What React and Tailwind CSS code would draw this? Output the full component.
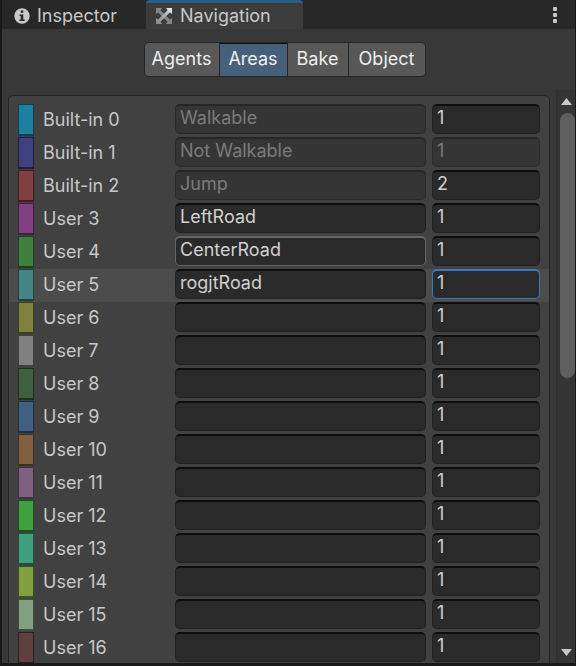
import { clsx } from "clsx";

const AREAS = [
  { label: "Built-in 0", color: "bg-[#1f7fa0]", name: "Walkable", cost: "1", nameLocked: true },
  { label: "Built-in 1", color: "bg-[#403f80]", name: "Not Walkable", cost: "1", nameLocked: true, costLocked: true },
  { label: "Built-in 2", color: "bg-[#803f40]", name: "Jump", cost: "2", nameLocked: true },
  { label: "User 3", color: "bg-[#803f80]", name: "LeftRoad", cost: "1" },
  { label: "User 4", color: "bg-[#3f803f]", name: "CenterRoad", cost: "1", hovered: true },
  { label: "User 5", color: "bg-[#458585]", name: "rogjtRoad", cost: "1", selected: true },
  { label: "User 6", color: "bg-[#80803f]", name: "", cost: "1" },
  { label: "User 7", color: "bg-[#808080]", name: "", cost: "1" },
  { label: "User 8", color: "bg-[#3f603f]", name: "", cost: "1" },
  { label: "User 9", color: "bg-[#3f6080]", name: "", cost: "1" },
  { label: "User 10", color: "bg-[#80603f]", name: "", cost: "1" },
  { label: "User 11", color: "bg-[#806080]", name: "", cost: "1" },
  { label: "User 12", color: "bg-[#3fa03f]", name: "", cost: "1" },
  { label: "User 13", color: "bg-[#3fa080]", name: "", cost: "1" },
  { label: "User 14", color: "bg-[#80a03f]", name: "", cost: "1" },
  { label: "User 15", color: "bg-[#80a080]", name: "", cost: "1" },
  { label: "User 16", color: "bg-[#603f40]", name: "", cost: "1" },
];

function Field({ id, value, locked, hovered, focused, label, className }) {
  return (
    <input
      id={id}
      aria-label={label}
      type="text"
      defaultValue={value}
      disabled={locked}
      className={clsx(
        "h-[30px] min-w-0 rounded-[5px] border border-t-2 px-1 pb-1 text-lg leading-6 outline-none",
        locked ? "bg-[#353535] text-[#7b7b7b]" : "bg-[#2a2a2a] text-[#d0d0d0]",
        focused && "border-[#3a79bb]",
        hovered && "border-[#656565]",
        !focused && !hovered && (locked ? "border-[#2b2b2b] border-t-[#262626]" : "border-[#212121] border-t-[#0d0d0d]"),
        className
      )}
    />
  );
}

function AreaRow({ area, index }) {
  const id = `area-${index}`;
  return (
    <li className={clsx("flex h-[33px] items-start px-[9px]", area.selected && "bg-[#4c4c4c]")}>
      <span className={clsx("h-8 w-4 shrink-0 border border-b-2 border-black/50", area.color)} />
      <label htmlFor={id} className="ml-[9px] w-[132px] shrink-0 text-lg leading-8 text-[#c8c8c8]">
        {area.label}
      </label>
      <Field id={id} value={area.name} locked={area.nameLocked} hovered={area.hovered} className="flex-1" />
      <Field
        value={area.cost}
        locked={area.costLocked}
        focused={area.selected}
        label={`${area.label} cost`}
        className="ml-[6px] w-[108px]"
      />
    </li>
  );
}

function InfoIcon() {
  return (
    <svg viewBox="0 0 16 16" className="size-4" aria-hidden="true">
      <circle cx="8" cy="8" r="7.7" fill="#c8c8c8" />
      <path d="M6.7 2.6h2.6v2.2H6.7zM5.6 6.4h3.7v5h1.4v1.7H5.4v-1.7h1.3V8.1H5.6z" fill="#282828" />
    </svg>
  );
}

function NavigationIcon() {
  return (
    <svg viewBox="0 0 16 16" className="size-4" aria-hidden="true">
      <defs>
        <linearGradient id="nav-shade" x1="0" y1="1" x2="1" y2="0">
          <stop offset="0" stopColor="#8a8a8a" />
          <stop offset="0.5" stopColor="#a8a8a8" />
          <stop offset="1" stopColor="#f0f0f0" />
        </linearGradient>
      </defs>
      <path
        fill="#868686"
        d="M0 0h6L4.400 2.200 13.800 11.600 16 10v6h-6l1.600-2.200L2.200 4.400 0 6z"
      />
      <path
        fill="url(#nav-shade)"
        d="M16 0v6l-2.200-1.600L4.400 13.800 6 16H0v-6l2.200 1.600L11.600 2.200 10 0z"
      />
    </svg>
  );
}

function TabBar() {
  return (
    <header className="flex h-[29px] shrink-0 bg-[#282828] text-lg leading-7 text-[#c8c8c8]" role="tablist">
      <button role="tab" aria-selected="false" className="flex w-36 items-center gap-[7px] pb-px pl-3 pt-1">
        <InfoIcon />
        Inspector
      </button>
      <button
        role="tab"
        aria-selected="true"
        className="flex w-[157px] items-center gap-2 rounded-t-sm border-t-[3px] border-[#2c5d87] bg-[#3c3c3c] pl-[10px]"
      >
        <NavigationIcon />
        Navigation
      </button>
      <button aria-label="Tab menu" className="ml-auto flex w-10 items-center justify-center">
        <svg viewBox="0 0 4 16" className="h-4 w-1" fill="#c8c8c8" aria-hidden="true">
          <rect width="4" height="4" rx="1" />
          <rect y="6" width="4" height="4" rx="1" />
          <rect y="12" width="4" height="4" rx="1" />
        </svg>
      </button>
    </header>
  );
}

const MODES = [
  { label: "Agents", width: "w-[74px]" },
  { label: "Areas", width: "w-[67px]", active: true },
  { label: "Bake", width: "w-[60px]" },
  { label: "Object", width: "w-[76px]" },
];

function ModeBar() {
  return (
    <div className="mt-[13px] flex shrink-0 justify-center pr-2">
      <nav className="flex h-[35px] gap-px overflow-hidden rounded-[5px] border border-[#252525] bg-[#252525] text-lg">
        {MODES.map((mode) => (
          <button
            key={mode.label}
            className={clsx(
              "pb-0.5 text-[#eeeeee]",
              mode.width,
              mode.active ? "border-t border-[#0d0d0d] bg-[#46607c]" : "bg-[#585858]"
            )}
          >
            {mode.label}
          </button>
        ))}
      </nav>
    </div>
  );
}

function ScrollBar() {
  return (
    <div className="flex w-[19px] shrink-0 flex-col items-center border-l-2 border-[#303030] bg-[#353535]">
      <button aria-label="Scroll up" className="flex h-6 w-full items-end justify-center pb-2">
        <svg viewBox="0 0 11 7" className="h-[7px] w-[11px]" fill="#c8c8c8" aria-hidden="true">
          <path d="M5.500 0 11 7H0z" />
        </svg>
      </button>
      <div className="min-h-0 w-full flex-1">
        <div className="ml-[2px] h-[49.500%] rounded-full bg-[#5f5f5f]" />
      </div>
      <button aria-label="Scroll down" className="flex h-[14px] w-full items-start justify-center">
        <svg viewBox="0 0 11 7" className="h-[7px] w-[11px]" fill="#c8c8c8" aria-hidden="true">
          <path d="M0 0h11L5.500 7z" />
        </svg>
      </button>
    </div>
  );
}

export default function App() {
  return (
    <div className="flex h-screen flex-col border-b-[3px] border-l-2 border-r border-[#191919] bg-[#383838] font-['Inter',sans-serif]">
      <TabBar />
      <ModeBar />
      <main className="mt-3 flex min-h-0 flex-1">
        <div className="min-w-0 flex-1 overflow-hidden pl-[6px] pr-[6px] pt-[6px]">
          <ul className="rounded-t-[5px] border border-[#242424] bg-[#414141] pt-2">
            {AREAS.map((area, index) => (
              <AreaRow key={area.label} area={area} index={index} />
            ))}
          </ul>
        </div>
        <ScrollBar />
      </main>
    </div>
  );
}
